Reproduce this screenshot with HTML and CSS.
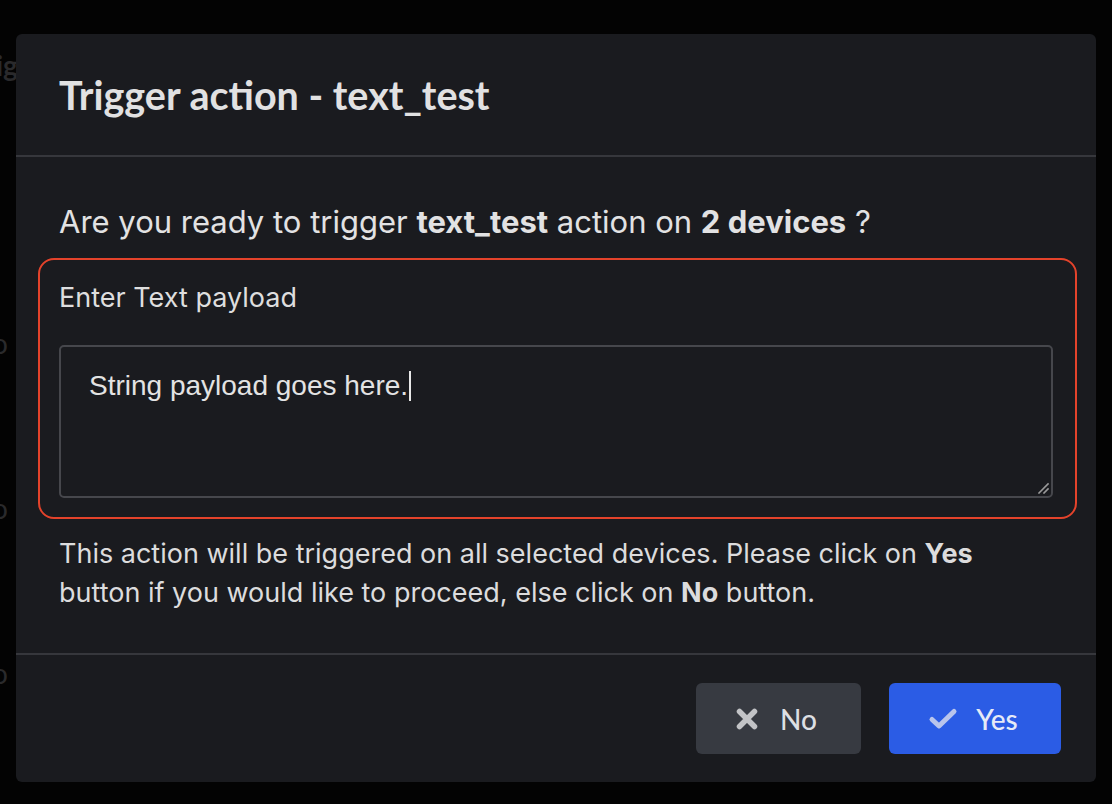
FILE: index.html
```html
<!DOCTYPE html>
<html>
<head>
<meta charset="utf-8">
<link rel="stylesheet" href="styles.css">
</head>
<body>
<div class="backdrop">
  <span class="bg-text bg-1">ig</span>
  <span class="bg-text bg-2">o</span>
  <span class="bg-text bg-3">o</span>
  <span class="bg-text bg-4">o</span>
</div>
<div class="modal">
  <div class="modal-header">
    <h1 class="modal-title">Trigger action - text_test</h1>
  </div>
  <div class="modal-body">
    <p class="question">Are you ready to trigger <b>text_test</b> action on <b>2 devices</b> ?</p>
    <div class="payload-box">
      <label class="payload-label">Enter Text payload</label>
      <div class="textarea">
        <span class="textarea-text">String payload goes here.</span><span class="caret"></span>
        <svg class="grip" width="12" height="12" viewBox="0 0 12 12"><path d="M11 2 L2 11 M11 7 L7 11" stroke="#9a9a9a" stroke-width="1.6" stroke-linecap="square"/></svg>
      </div>
    </div>
    <p class="note">This action will be triggered on all selected devices. Please click on <b>Yes</b> button if you would like to proceed, else click on <b>No</b> button.</p>
  </div>
  <div class="modal-footer">
    <button class="btn btn-no">
      <svg class="icon" width="22" height="22" viewBox="0 0 22 22"><path d="M3.5 3.5 L18.5 18.5 M18.5 3.5 L3.5 18.5" stroke="#c2c3c6" stroke-width="5.5" stroke-linecap="round"/></svg>
      <span>No</span>
    </button>
    <button class="btn btn-yes">
      <svg class="icon" width="30" height="24" viewBox="0 0 30 24"><path d="M4 12.5 L11 19 L26 4.5" fill="none" stroke="#b9c5ec" stroke-width="5" stroke-linecap="round" stroke-linejoin="round"/></svg>
      <span>Yes</span>
    </button>
  </div>
</div>
</body>
</html>
```

FILE: styles.css
```css
html, body {
  margin: 0;
  padding: 0;
}
body {
  background: #030303;
  width: 1112px;
  height: 804px;
  overflow: hidden;
  position: relative;
  font-family: Inter, "Noto Sans", sans-serif;
}
.backdrop {
  position: absolute;
  inset: 0;
}
.bg-text {
  position: absolute;
  color: #2a2a2c;
  font-family: Lato, sans-serif;
  font-size: 28px;
  font-weight: 700;
}
.bg-1 { left: -4px; top: 48px; }
.bg-2 { left: -8px; top: 326px; font-weight: 400; }
.bg-3 { left: -8px; top: 491px; font-weight: 400; }
.bg-4 { left: -8px; top: 656px; font-weight: 400; }

.modal {
  position: absolute;
  left: 16px;
  top: 34px;
  width: 1080px;
  height: 748px;
  background: #1a1b1f;
  border-radius: 6px;
  display: flex;
  flex-direction: column;
  color: #e2e2e3;
}
.modal-header {
  flex: none;
  height: 123px;
  box-sizing: border-box;
  border-bottom: 2px solid #36373c;
  display: flex;
  align-items: center;
  padding: 0 43px;
}
.modal-title {
  margin: 0;
  font-family: Lato, sans-serif;
  font-weight: 700;
  font-size: 39.5px;
  line-height: 1.2;
  color: #e1e1e2;
}
.modal-body {
  flex: 1;
  padding: 45px 19px 0 22px;
  border-bottom: 2px solid #36373c;
}
.question {
  margin: 0 0 16px 21px;
  font-size: 31px;
  line-height: 40px;
}
.question b, .note b { font-weight: 700; }
.payload-box {
  border: 2px solid #e4432b;
  border-radius: 16px;
  padding: 20px 22px 19px 19px;
}
.payload-label {
  display: block;
  font-size: 27px;
  line-height: 36px;
  margin-bottom: 29px;
  color: #dedede;
}
.textarea {
  position: relative;
  height: 153px;
  border: 2px solid #46474c;
  border-radius: 5px;
  box-sizing: border-box;
  padding: 23px 28px 0;
  font-family: "Liberation Sans", Arial, sans-serif;
  font-size: 28px;
  line-height: 32px;
  color: #e3e3e3;
}
.caret {
  display: inline-block;
  width: 2px;
  height: 30px;
  background: #e8e8e8;
  vertical-align: -6px;
  margin-left: 1px;
}
.grip {
  position: absolute;
  right: 2px;
  bottom: 2px;
}
.note {
  margin: 15px 21px 0 21px;
  font-size: 27px;
  line-height: 39px;
  color: #dcdcdd;
}
.modal-footer {
  flex: none;
  height: 127px;
  box-sizing: border-box;
  display: flex;
  justify-content: flex-end;
  align-items: flex-start;
  gap: 28px;
  padding: 28px 35px 0 0;
}
.btn {
  height: 71px;
  border: none;
  border-radius: 6px;
  display: flex;
  align-items: center;
  justify-content: center;
  gap: 22px;
  font-family: Lato, sans-serif;
  font-size: 28px;
  font-weight: 500;
  color: #dddfe3;
  padding: 0;
}
.btn-no {
  width: 165px;
  background: #373a41;
  padding-right: 4px;
}
.btn-yes {
  width: 172px;
  background: #2b5ce5;
  color: #e6eaf7;
  gap: 18px;
  padding-right: 4px;
}
.icon { display: block; }
```
